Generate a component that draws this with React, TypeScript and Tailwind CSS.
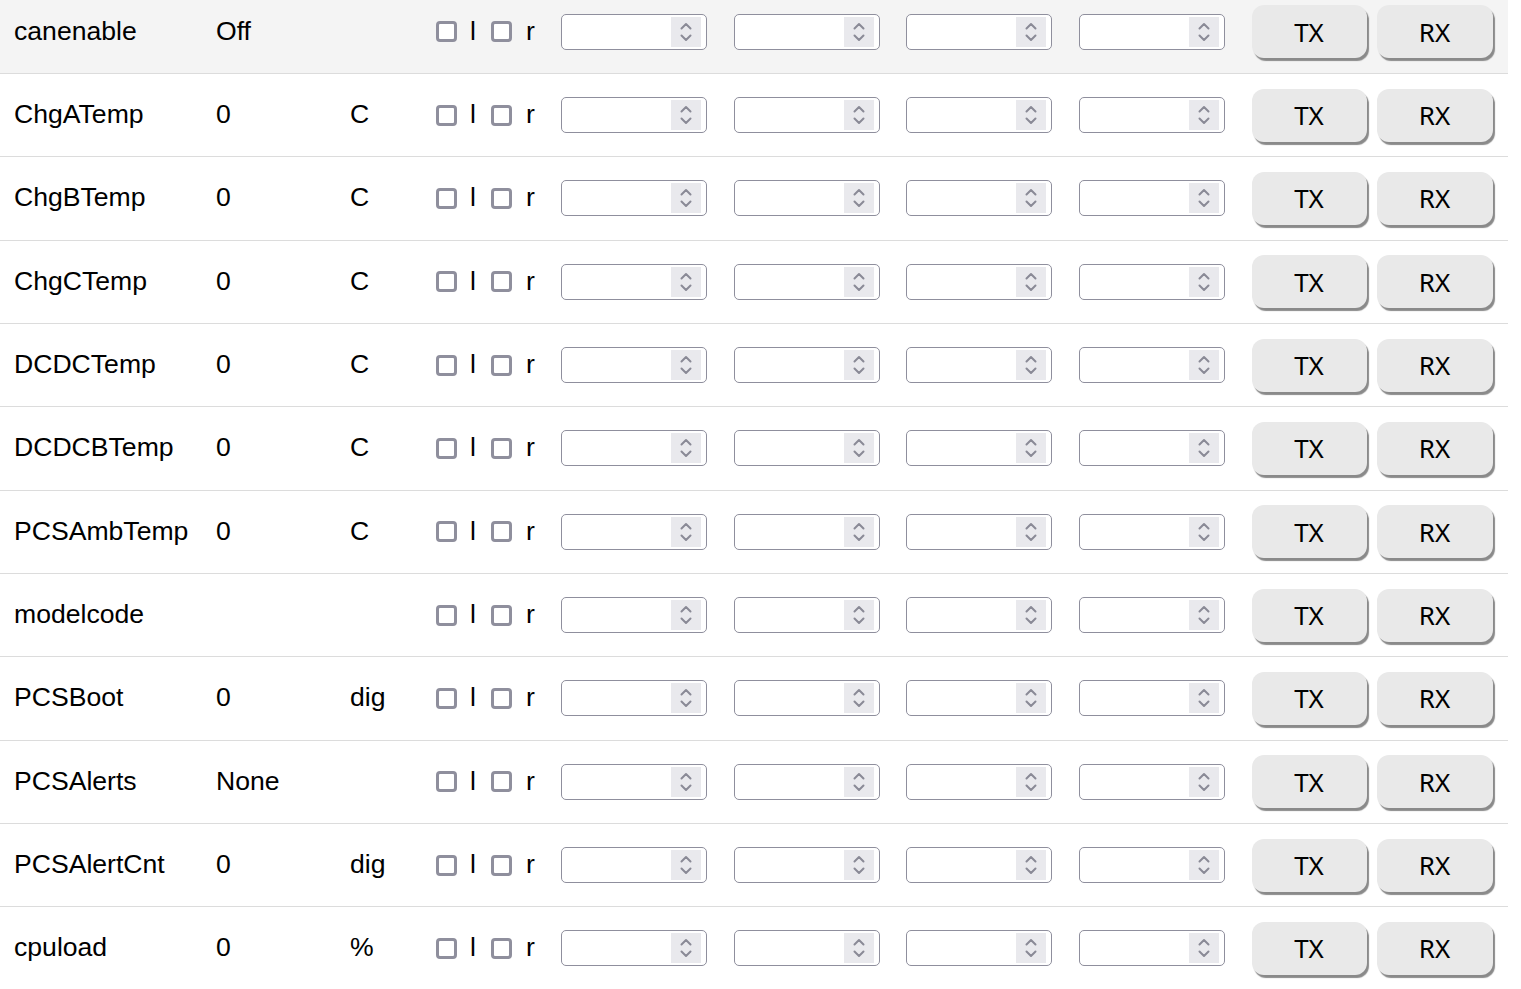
const rows = [
  { name: "canenable", value: "Off", unit: "" },
  { name: "ChgATemp", value: "0", unit: "C" },
  { name: "ChgBTemp", value: "0", unit: "C" },
  { name: "ChgCTemp", value: "0", unit: "C" },
  { name: "DCDCTemp", value: "0", unit: "C" },
  { name: "DCDCBTemp", value: "0", unit: "C" },
  { name: "PCSAmbTemp", value: "0", unit: "C" },
  { name: "modelcode", value: "", unit: "" },
  { name: "PCSBoot", value: "0", unit: "dig" },
  { name: "PCSAlerts", value: "None", unit: "" },
  { name: "PCSAlertCnt", value: "0", unit: "dig" },
  { name: "cpuload", value: "0", unit: "%" },
];

function Checkbox() {
  return <span className="block w-[21px] h-[21px] rounded-[4px] border-[3px] border-[#8f8f9d] bg-white" />;
}

function NumberBox() {
  return (
    <div className="w-[146px] h-[36px] rounded-[5px] border-[1.5px] border-[#8f8f9d] bg-white flex items-center justify-end pr-[5px]">
      <div className="w-[30px] h-[30px] bg-[#e9e9ed] flex items-center justify-center">
        <svg width="14" height="22" viewBox="0 0 14 22" fill="none" stroke="#8a8a96" strokeWidth="2" strokeLinecap="round" strokeLinejoin="round">
          <path d="M2.5 7.5 L7 3 L11.5 7.5" />
          <path d="M2.5 14.5 L7 19 L11.5 14.5" />
        </svg>
      </div>
    </div>
  );
}

function Btn({ label, w }: { label: string; w: string }) {
  return (
    <button
      className={`${w} h-[53px] rounded-[12px] bg-[#e9e9e9] text-black text-[26px] shadow-[2px_3px_1px_#8a8a8a] flex items-center justify-center`}
      style={{ fontFamily: '"Noto Sans", "Open Sans", sans-serif' }}
    >
      <span className="leading-none">{label}</span>
    </button>
  );
}

export default function App() {
  return (
    <div className="bg-white min-h-screen overflow-hidden" style={{ fontFamily: '"Liberation Sans", Arial, sans-serif' }}>
      <div className="w-[1508px] -mt-[9.4px]">
        {rows.map((r, i) => (
          <div
            key={r.name}
            className={`h-[83.33px] flex items-center border-b-[1.5px] border-[#dcdcdc] text-[26.6px] text-black ${i === 0 ? "bg-[#f4f4f4]" : "bg-white"}`}
          >
            <div className="w-[216px] pl-[14px] whitespace-nowrap">{r.name}</div>
            <div className="w-[134px]">{r.value}</div>
            <div className="w-[86px]">{r.unit}</div>
            <div className="w-[125px] flex items-center">
              <Checkbox />
              <span className="ml-[13px] w-[6px]">l</span>
              <span className="ml-[15px]"><Checkbox /></span>
              <span className="ml-[14px]">r</span>
            </div>
            <div className="flex items-center gap-[26.5px]">
              <NumberBox />
              <NumberBox />
              <NumberBox />
              <NumberBox />
            </div>
            <div className="ml-[27px] flex items-center gap-[10px]">
              <Btn label="TX" w="w-[115px]" />
              <Btn label="RX" w="w-[116px]" />
            </div>
          </div>
        ))}
      </div>
    </div>
  );
}
